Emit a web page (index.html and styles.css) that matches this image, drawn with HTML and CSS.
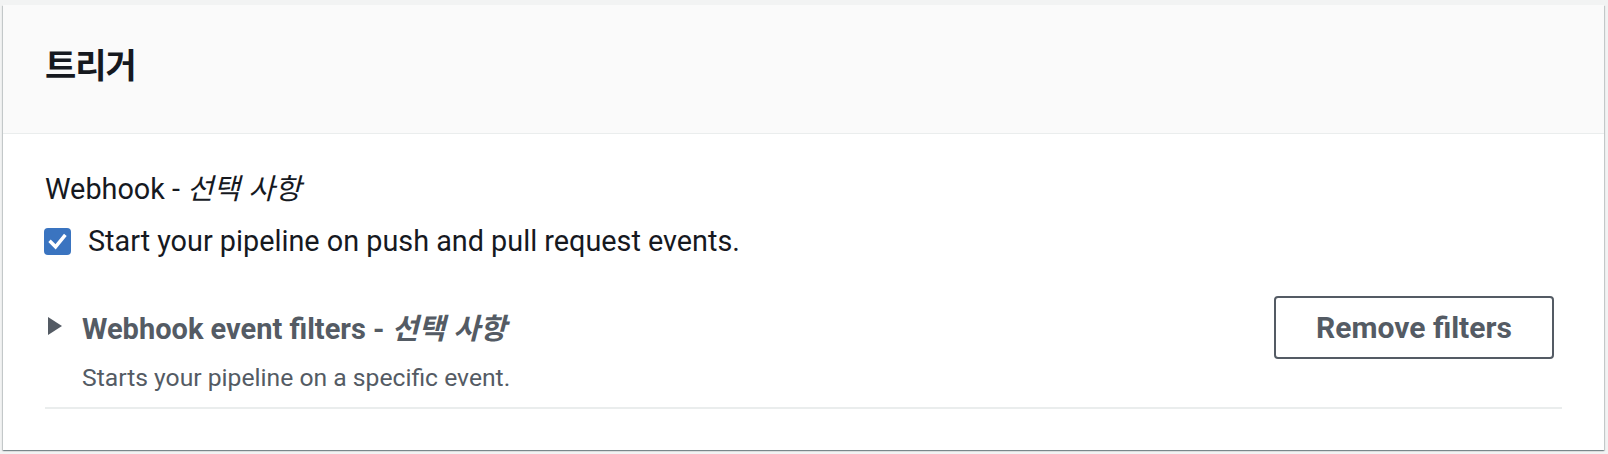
FILE: index.html
```html
<!DOCTYPE html>
<html lang="ko">
<head>
<meta charset="utf-8">
<link rel="stylesheet" href="styles.css">
</head>
<body>
<div class="card">
  <div class="card-header">
    <h2 class="title">트리거</h2>
  </div>
  <div class="card-body">
    <div class="field-label">Webhook - <i>선택 사항</i></div>
    <label class="check-row">
      <span class="checkbox">
        <svg viewBox="0 0 28 28" width="27" height="27"><path d="M7 14.5 L12 19.5 L21 8.5" fill="none" stroke="#fff" stroke-width="3.6" stroke-linecap="square" stroke-linejoin="miter"/></svg>
      </span>
      <span class="check-text">Start your pipeline on push and pull request events.</span>
    </label>
    <div class="expand">
      <div class="expand-left">
        <div class="expand-head">
          <svg class="caret" viewBox="0 0 16 20" width="16" height="20"><path d="M1 1 L15 10 L1 19 Z" fill="#545b64"/></svg>
          <span class="expand-title">Webhook event filters - <i>선택 사항</i></span>
        </div>
        <div class="expand-desc">Starts your pipeline on a specific event.</div>
      </div>
      <button class="btn">Remove filters</button>
    </div>
  </div>
</div>
</body>
</html>
```
FILE: styles.css
```css
html, body {
  margin: 0;
  padding: 0;
}
body {
  background: #f2f3f3;
  padding: 5px 4px 5px 3px;
  font-family: Roboto, "Noto Sans CJK KR", sans-serif;
  color: #16191f;
}
.card {
  background: #fff;
  box-shadow: 0 1px 1px 0 rgba(0,28,36,.3), 1px 1px 1px 0 rgba(0,28,36,.15), -1px 1px 1px 0 rgba(0,28,36,.15);
}
.card-header {
  background: #fafafa;
  border-bottom: 1px solid #eaeded;
  height: 129px;
  box-sizing: border-box;
  padding: 0 42px 12px;
  display: flex;
  align-items: center;
}
.title {
  margin: 0;
  font-family: "Noto Sans CJK KR", sans-serif;
  font-size: 34px;
  font-weight: 700;
  color: #16191f;
  letter-spacing: -1px;
}
.card-body {
  padding: 33px 42px 41px 42px;
}
.field-label {
  font-size: 28.8px;
  line-height: 40px;
}
.field-label i, .expand-title i {
  font-family: "Noto Sans CJK KR", sans-serif;
}
.check-row {
  display: flex;
  align-items: center;
  margin-top: 12px;
  height: 40px;
}
.checkbox {
  width: 27px;
  height: 27px;
  border-radius: 4px;
  background: #3a74c0;
  display: flex;
  align-items: center;
  justify-content: center;
  margin-left: -1px;
}
.check-text {
  margin-left: 17px;
  font-size: 28.8px;
}
.expand {
  display: flex;
  justify-content: space-between;
  align-items: flex-start;
  margin-top: 45px;
  padding-bottom: 12px;
  border-bottom: 2px solid #eaeded;
}
.expand-head {
  display: flex;
  align-items: center;
  height: 40px;
}
.caret {
  margin-left: 2px;
  margin-right: 19px;
}
.expand-title {
  font-size: 29px;
  font-weight: 700;
  color: #545b64;
}
.expand-desc {
  margin-left: 37px;
  margin-top: 15px;
  font-size: 24.7px;
  color: #545b64;
  line-height: 34px;
}
.btn {
  margin-top: -10px;
  margin-right: 8px;
  width: 280px;
  height: 63px;
  background: #fff;
  border: 2px solid #545b64;
  border-radius: 4px;
  font-family: Roboto, sans-serif;
  font-size: 30px;
  font-weight: 700;
  color: #545b64;
}
```
